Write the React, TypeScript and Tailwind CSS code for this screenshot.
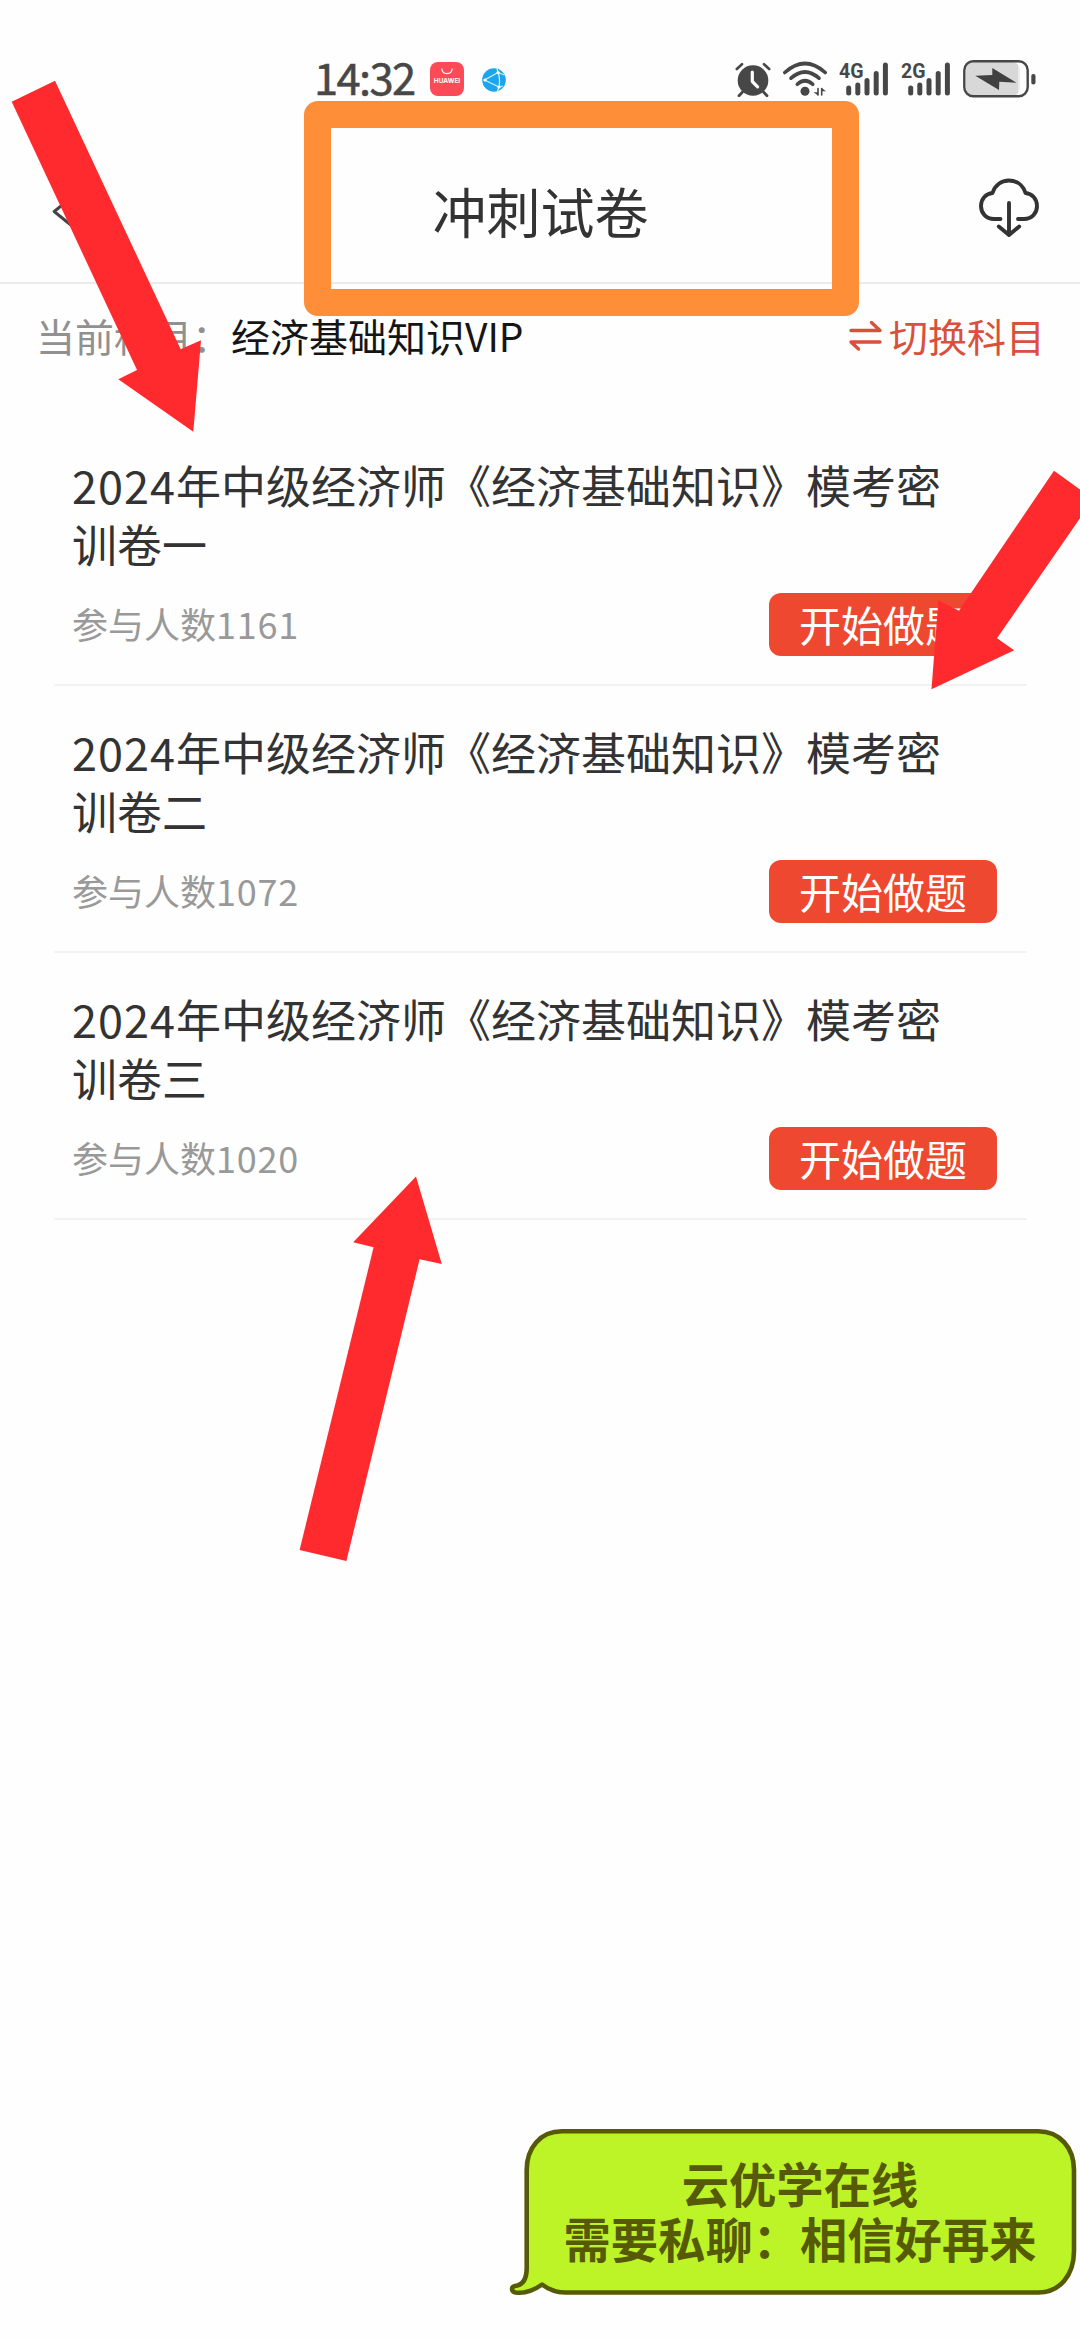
const papers = [
  { name: '2024年中级经济师《经济基础知识》模考密训卷一', count: 1161 },
  { name: '2024年中级经济师《经济基础知识》模考密训卷二', count: 1072 },
  { name: '2024年中级经济师《经济基础知识》模考密训卷三', count: 1020 },
];

function AlarmIcon() {
  return (
    <svg className="h-9 w-9" viewBox="0 0 36 36" fill="none" stroke="#474747" strokeLinecap="round">
      <circle cx="18" cy="19.5" r="15.3" fill="#474747" stroke="none" />
      <path d="M1.8 8 L7 3.2 M34.2 8 L29 3.2" strokeWidth="2.6" />
      <path d="M7.5 31 L4 34.8 M28.5 31 L32 34.8" strokeWidth="2.8" />
      <path d="M17.3 11 V20.5 L22.6 25.8" stroke="#fefefe" strokeWidth="3.2" strokeLinejoin="round" />
    </svg>
  );
}

function WifiIcon() {
  return (
    <svg className="h-9 w-11" viewBox="0 0 44 36" fill="none" stroke="#474747" strokeLinecap="round" strokeWidth="3.6">
      <path d="M1.8 11.5 Q22 -6.5 42.2 11.5" />
      <path d="M8 17.2 Q22 4.8 36 17.2" />
      <path d="M14.3 23.3 Q22 16.2 29.7 23.3" />
      <circle cx="22" cy="30.3" r="4.5" fill="#474747" stroke="none" />
      <path d="M35 27 V34.5 L30.5 31.2 H35 M38.7 34.5 V27 L43 30.2 H38.7" fill="#474747" stroke="none" />
      <path d="M35 27.5 V34 M38.7 27.5 V34" strokeWidth="1.6" />
    </svg>
  );
}

function SignalIcon({ label }: { label: string }) {
  return (
    <svg className="h-9 w-[50px] overflow-visible" viewBox="0 0 50 36" stroke="#474747" strokeLinecap="round" strokeWidth="5">
      <text x="0" y="17" fontSize="21" fontWeight="700" fill="#474747" stroke="none" textLength="24.5" lengthAdjust="spacingAndGlyphs" className="font-[Roboto,sans-serif]">
        {label}
      </text>
      <path d="M9.7 27 V32 M18.8 24 V32 M28 19.5 V32 M37.2 12.5 V32 M46.4 4 V32" />
    </svg>
  );
}

function BatteryIcon() {
  return (
    <svg className="h-[38px] w-[73px]" viewBox="0 0 73 38">
      <rect x="3" y="2" width="54" height="34" rx="8" fill="#d8d8d8" />
      <path d="M56 1.5 V36.5" stroke="#fefefe" strokeWidth="1" />
      <rect x="1.3" y="1.3" width="63.4" height="35" rx="9" fill="none" stroke="#474747" strokeWidth="2.4" />
      <path d="M12.3 15.7 L29.3 14.9 V8 L53.5 22.8 L36.3 21.7 L36 30 Z" fill="#404040" />
      <rect x="68.3" y="14" width="4.2" height="10.5" rx="2" fill="#474747" />
    </svg>
  );
}

function StatusBar() {
  return (
    <div className="flex h-[104px] items-end pb-1.5 pl-[314px] text-[#474747]">
      <span className="mb-[3px] h-9 w-[104px] text-[43.5px] leading-9 font-normal tracking-[-1.6px] whitespace-nowrap [-webkit-text-stroke:0.5px_#474747]">14:32</span>
      <span className="mb-0.5 ml-3 flex h-[34px] w-[34px] flex-col items-center rounded-lg bg-[#fc4a57]">
        <svg className="mt-1.5 h-[7px] w-3" viewBox="0 0 12 7" fill="none" stroke="#fff" strokeWidth="1.2">
          <path d="M0.8 0.5 C1.2 7.3 10.8 7.3 11.2 0.5" />
        </svg>
        <span className="mt-[3px] font-[Inter,sans-serif] text-[6.5px] leading-[7px] font-bold text-white">HUAWEI</span>
      </span>
      <svg className="mb-1.5 ml-[18px] h-6 w-6" viewBox="0 0 24 24" fill="none">
        <circle cx="12" cy="12" r="11.8" fill="#1ba5ec" />
        <path d="M2.5 12 L16 4.5 M2.5 12 L17 19 M16 4.5 Q18.5 11 17 19 M16 4.5 L15 0.5 M16 4.5 L22.5 7 M17 19 L15.5 23 M17 19 L21 18" stroke="#d6f2ff" strokeWidth="1.2" />
        <circle cx="16" cy="4.5" r="1.6" fill="#fff" />
        <circle cx="3" cy="12" r="1.6" fill="#fff" />
        <circle cx="17" cy="19" r="1.6" fill="#fff" />
      </svg>
      <div className="ml-[229px] flex h-[38px] items-center">
        <AlarmIcon />
        <span className="ml-3 flex"><WifiIcon /></span>
        <span className="ml-3 flex"><SignalIcon label="4G" /></span>
        <span className="ml-3 flex"><SignalIcon label="2G" /></span>
        <span className="ml-3 flex"><BatteryIcon /></span>
      </div>
    </div>
  );
}

function Header() {
  return (
    <header className="flex h-[180px] items-center justify-between border-b-2 border-[#ececec] pt-[38px] pr-10 pl-[51px]">
      <svg className="h-[42px] w-[54px]" viewBox="0 0 54 42" fill="none" stroke="#444" strokeWidth="3" strokeLinejoin="round" strokeLinecap="round">
        <path d="M26 2 L3.2 20.5 L26 39" />
      </svg>
      <h1 className="-mt-0.5 -translate-x-px text-[54px] leading-[60px] text-[#333]">冲刺试卷</h1>
      <svg className="h-[62px] w-[62px] -translate-y-1" viewBox="0 0 62 62" fill="none" stroke="#333" strokeWidth="3.9" strokeLinecap="round" strokeLinejoin="round">
        <path d="M22.5 42 H16 C8 42 3 36 3 29 C3 22 8 16.5 14.5 16 C17 8 23.5 3.5 31 3.5 C38.5 3.5 45 8 47.5 16 C54 16.5 59 22 59 29 C59 36 54 42 46 42 H40" />
        <path d="M31 26 V58 M20.8 49.5 L31 58 L41.2 49.5" />
      </svg>
    </header>
  );
}

function SubjectBar() {
  return (
    <div className="flex h-[112px] items-center justify-between pr-[35px] pb-2.5 pl-9 text-[39px] leading-[48px]">
      <p className="whitespace-nowrap text-[#151515]">
        <span className="text-[#909090]">当前科目：</span>经济基础知识VIP
      </p>
      <div className="flex items-center gap-1.5 text-[#d9503c]">
        <svg className="mt-0.5 h-8 w-[34px]" viewBox="0 0 34 32" fill="none" stroke="currentColor" strokeWidth="3.4" strokeLinecap="round" strokeLinejoin="round">
          <path d="M2 10.5 H31 L22.5 2.5 M31 22 H2 L9.5 29" />
        </svg>
        <span>切换科目</span>
      </div>
    </div>
  );
}

function PaperItem({ name, count }: { name: string; count: number }) {
  return (
    <li className="h-[267px] border-b-2 border-[#f2f2f2] pt-9 pr-[30px] pl-[18px]">
      <h2 className="w-[880px] text-[45px] leading-[59px] text-[#333]">
        <span className="inline-block tracking-[1px]">{name.slice(0, 4)}</span>
        {name.slice(4)}
      </h2>
      <div className="mt-5 flex h-[63px] items-center justify-between">
        <p className="pb-1 text-[36px] leading-[54px] text-[#999]">
          参与人数<span className="tracking-[0.8px]">{count}</span>
        </p>
        <button className="h-[63px] w-[228px] rounded-xl bg-[#ee4930] pb-0.5 text-[42px] leading-[61px] text-white">开始做题</button>
      </div>
    </li>
  );
}

function Bubble() {
  return (
    <div className="absolute top-[2128px] left-[508px] h-[170px] w-[570px]">
      <svg className="absolute inset-0 h-full w-full" viewBox="0 0 570 170" fill="#bdf428" stroke="#565905" strokeWidth="4.6" strokeLinejoin="round">
        <path d="M54 3.3 H530 C552 3.3 566 20 566 42 V123 C566 147 552 164.5 530 164.5 H57 C47 164.5 40 161 34 156.5 C25 163 15 165.5 7.5 164.5 C3 163.5 3 159 7 158 C16 157 18.7 150 18.7 140 V42 C18.7 20 32 3.3 54 3.3 Z" />
      </svg>
      <p className="relative pt-[27px] pl-[14px] text-center text-[47.3px] leading-[55px] font-bold whitespace-nowrap text-[#565905]">
        云优学在线
        <br />
        需要私聊：相信好再来
      </p>
    </div>
  );
}

function Annotations() {
  return (
    <>
      <div className="absolute top-[101px] left-[304px] h-[215px] w-[555px] rounded-[14px] border-[27px] border-[#ff8e39]" />
      <svg className="absolute inset-0 h-full w-full" viewBox="0 0 1080 2339" fill="#fe2a2d">
        <path d="M11.7 101.7 L55 80.7 L180.7 349.3 L201 340.3 L193.3 431.7 L118.3 379.3 L137 370 Z" />
        <path d="M1054 470.7 L1080 489.5 V518.3 L997 638.3 L1014.2 650.3 L931.5 689.3 L938.4 600.3 L959 610.7 Z" />
        <path d="M416 1176.5 L441.8 1264 L419.6 1259.3 L346.4 1561 L299.6 1550 L373.6 1247.3 L353.2 1242.3 Z" />
      </svg>
    </>
  );
}

export default function App() {
  return (
    <main className="relative h-[2339px] w-[1080px] overflow-hidden bg-[#fefefe] font-['Noto_Sans_CJK_SC',sans-serif]">
      <StatusBar />
      <Header />
      <SubjectBar />
      <ul className="mr-[53px] ml-[54px] pt-[23px]">
        {papers.map((paper) => (
          <PaperItem key={paper.name} {...paper} />
        ))}
      </ul>
      <Annotations />
      <Bubble />
    </main>
  );
}
